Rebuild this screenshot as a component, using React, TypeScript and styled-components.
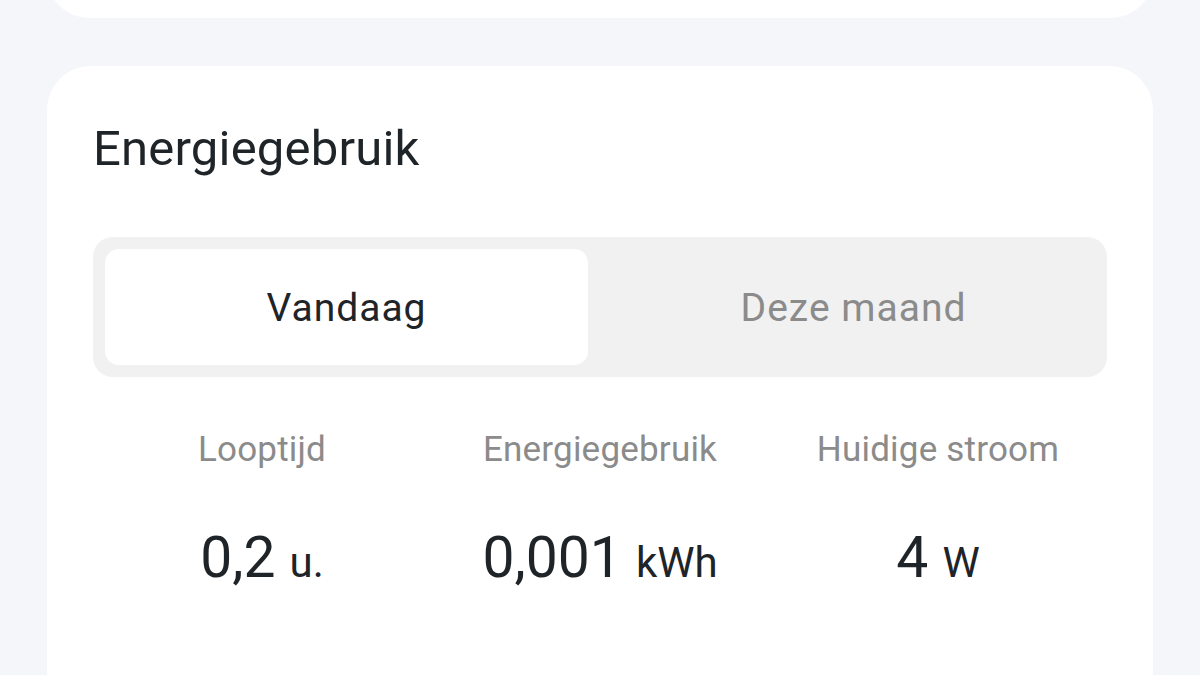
import styled, { createGlobalStyle } from 'styled-components';

interface Stat {
  label: string;
  value: string;
  unit: string;
}

const stats: Stat[] = [
  { label: 'Looptijd', value: '0,2', unit: 'u.' },
  { label: 'Energiegebruik', value: '0,001', unit: 'kWh' },
  { label: 'Huidige stroom', value: '4', unit: 'W' },
];

const App = () => {
  return (
    <>
      <GlobalStyle />
      <Page>
        <TopCard />
        <Card>
          <Title>Energiegebruik</Title>
          <Segmented>
            <Tab $active>Vandaag</Tab>
            <Tab>Deze maand</Tab>
          </Segmented>
          <StatsGrid>
            {stats.map((stat) => (
              <StatColumn key={stat.label}>
                <StatLabel>{stat.label}</StatLabel>
                <StatValue>
                  {stat.value} <Unit>{stat.unit}</Unit>
                </StatValue>
              </StatColumn>
            ))}
          </StatsGrid>
        </Card>
      </Page>
    </>
  );
};

const GlobalStyle = createGlobalStyle`
  html, body {
    margin: 0;
    padding: 0;
    background-color: #f4f6f9;
    font-family: Roboto, 'Noto Sans', Arial, sans-serif;
  }
  body {
    height: 675px;
    overflow: hidden;
  }
`;

const Page = styled.div`
  display: flex;
  flex-direction: column;
  padding: 0 47px;
  background-color: #f4f6f9;
`;

const TopCard = styled.div`
  height: 140px;
  margin-top: -122px;
  border-radius: 42px;
  background-color: #ffffff;
`;

const Card = styled.div`
  margin-top: 48px;
  padding: 55px 46px 120px;
  border-radius: 44px;
  background-color: #ffffff;
`;

const Title = styled.h2`
  margin: 0;
  font-size: 49px;
  line-height: 56px;
  font-weight: 400;
  letter-spacing: 0.2px;
  color: #1f2428;
`;

const Segmented = styled.div`
  display: grid;
  grid-template-columns: 1fr 1fr;
  gap: 24px;
  margin-top: 60px;
  padding: 12px;
  height: 140px;
  box-sizing: border-box;
  border-radius: 20px;
  background-color: #f1f1f1;
`;

const Tab = styled.div<{ $active?: boolean }>`
  display: flex;
  align-items: center;
  justify-content: center;
  border-radius: 14px;
  font-size: 39px;
  line-height: 44px;
  letter-spacing: 1px;
  padding-top: 2px;
  color: ${({ $active }) => ($active ? '#1f2428' : '#8b8b8b')};
  background-color: ${({ $active }) => ($active ? '#ffffff' : 'transparent')};
`;

const StatsGrid = styled.div`
  display: grid;
  grid-template-columns: repeat(3, 1fr);
  margin-top: 53px;
`;

const StatColumn = styled.div`
  display: flex;
  flex-direction: column;
  align-items: center;
  gap: 56px;
`;

const StatLabel = styled.div`
  font-size: 35px;
  line-height: 40px;
  letter-spacing: 0.2px;
  color: #8b8b8b;
`;

const StatValue = styled.div`
  font-size: 57px;
  line-height: 64px;
  color: #1f2428;
  white-space: nowrap;
`;

const Unit = styled.span`
  font-size: 42px;
`;

export default App;
